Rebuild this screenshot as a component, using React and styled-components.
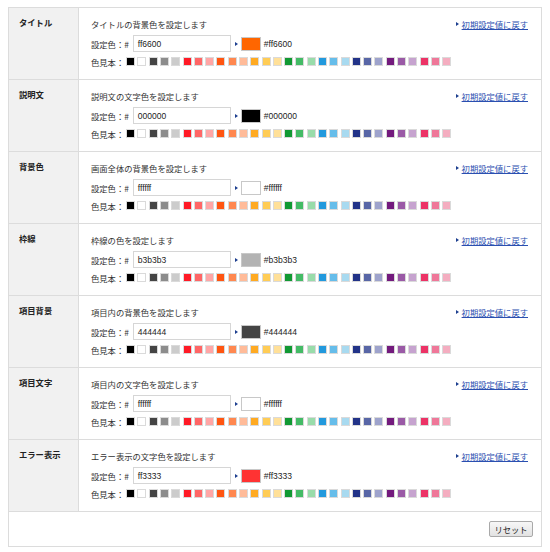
import React from "react";
import styled, { createGlobalStyle } from "styled-components";

const Global = createGlobalStyle`
  html, body { margin: 0; padding: 0; background: #fff; }
  body { font-family: "Noto Sans CJK JP", "Noto Sans", sans-serif; color: #333; }
`;

const Page = styled.div`
  padding: 7px 0 0 8px;
`;

const Table = styled.div`
  width: 534px;
  border: 1px solid #dcdcdc;
  box-sizing: border-box;
  font-size: 8.3px;
`;

const Row = styled.div`
  display: flex;
  height: 72px;
  border-bottom: 1px solid #dcdcdc;
  box-sizing: border-box;
`;

const Label = styled.div`
  width: 70px;
  flex: none;
  box-sizing: border-box;
  background: #f1f1f1;
  border-right: 1px solid #dcdcdc;
  padding: 9px 0 0 10px;
  font-weight: bold;
  line-height: 10px;
  color: #222;
`;

const Body = styled.div`
  flex: 1;
  display: flex;
  justify-content: space-between;
  padding: 11px 13px 0 12px;
`;

const Main = styled.div`
  display: flex;
  flex-direction: column;
`;

const Desc = styled.div`
  line-height: 10px;
  height: 10px;
`;

const Line = styled.div`
  display: flex;
  align-items: center;
  margin-top: ${(p) => p.$mt}px;
  height: ${(p) => p.$h}px;
`;

const Caption = styled.span`
  white-space: nowrap;
`;

const Input = styled.div`
  width: 98px;
  height: 17px;
  box-sizing: border-box;
  border: 1px solid #d6d6d6;
  margin-left: 4px;
  padding-left: 4px;
  display: flex;
  align-items: center;
  font-family: "Liberation Sans", Arial, sans-serif;
  font-size: 8.5px;
  color: #222;
`;

const Arrow = styled.span`
  display: inline-block;
  width: 0;
  height: 0;
  border-top: 2.5px solid transparent;
  border-bottom: 2.5px solid transparent;
  border-left: 3px solid #1d3f8f;
  margin: 0 ${(p) => p.$mr}px 0 ${(p) => p.$ml}px;
`;

const ColorBox = styled.span`
  width: 20px;
  height: 14px;
  box-sizing: border-box;
  border: 1px solid #c8c8c8;
  background: ${(p) => p.$c};
`;

const Hex = styled.span`
  margin-left: 3px;
  font-family: "Liberation Sans", Arial, sans-serif;
  font-size: 8.5px;
  color: #222;
`;

const Swatches = styled.div`
  display: flex;
  gap: 2.29px;
  margin-left: 2px;
`;

const Swatch = styled.span`
  width: 9px;
  height: 9px;
  box-sizing: border-box;
  border: 1px solid #dadada;
  background: ${(p) => p.$c};
`;

const Reset = styled.a`
  display: flex;
  align-items: center;
  height: 10px;
  line-height: 10px;
  color: #2a4fb0;
  text-decoration: underline;
  white-space: nowrap;
`;

const Footer = styled.div`
  height: 34px;
  display: flex;
  justify-content: flex-end;
  align-items: flex-start;
  padding: 9px 8px 0 0;
  box-sizing: border-box;
`;

const Button = styled.button`
  width: 44px;
  height: 16px;
  padding: 0;
  font-family: "Noto Sans CJK JP", sans-serif;
  font-size: 8.3px;
  color: #222;
  border: 1px solid #a9a9a9;
  border-radius: 2px;
  background: linear-gradient(#f7f7f7, #e2e2e2);
`;

const palette = [
  "#000000", "#ffffff", "#444444", "#8c8c8c", "#cccccc",
  "#ff1a26", "#ff6666", "#ffa6a6", "#ff5511", "#ff8850",
  "#ffbb99", "#ffaa22", "#ffcc55", "#ffe099", "#119933",
  "#44bb66", "#99dcaa", "#2299dd", "#66bdea", "#a8daf0",
  "#223388", "#5866a6", "#9ea3cc", "#731a7d", "#9a5aa6",
  "#c6a3cf", "#ec3366", "#ef7799", "#f4adc0",
];

const rows = [
  { label: "タイトル", desc: "タイトルの背景色を設定します", value: "ff6600" },
  { label: "説明文", desc: "説明文の文字色を設定します", value: "000000" },
  { label: "背景色", desc: "画面全体の背景色を設定します", value: "ffffff" },
  { label: "枠線", desc: "枠線の色を設定します", value: "b3b3b3" },
  { label: "項目背景", desc: "項目内の背景色を設定します", value: "444444" },
  { label: "項目文字", desc: "項目内の文字色を設定します", value: "ffffff" },
  { label: "エラー表示", desc: "エラー表示の文字色を設定します", value: "ff3333" },
];

export default function App() {
  return (
    <>
      <Global />
      <Page>
        <Table>
          {rows.map((r) => (
            <Row key={r.label}>
              <Label>{r.label}</Label>
              <Body>
                <Main>
                  <Desc>{r.desc}</Desc>
                  <Line $mt={6} $h={17}>
                    <Caption>設定色：#</Caption>
                    <Input>{r.value}</Input>
                    <Arrow $ml={4} $mr={3} />
                    <ColorBox $c={"#" + r.value} />
                    <Hex>#{r.value}</Hex>
                  </Line>
                  <Line $mt={4} $h={11}>
                    <Caption>色見本：</Caption>
                    <Swatches>
                      {palette.map((c, i) => (
                        <Swatch key={i} $c={c} />
                      ))}
                    </Swatches>
                  </Line>
                </Main>
                <Reset href="#">
                  <Arrow $ml={0} $mr={3} />
                  初期設定値に戻す
                </Reset>
              </Body>
            </Row>
          ))}
          <Footer>
            <Button>リセット</Button>
          </Footer>
        </Table>
      </Page>
    </>
  );
}
